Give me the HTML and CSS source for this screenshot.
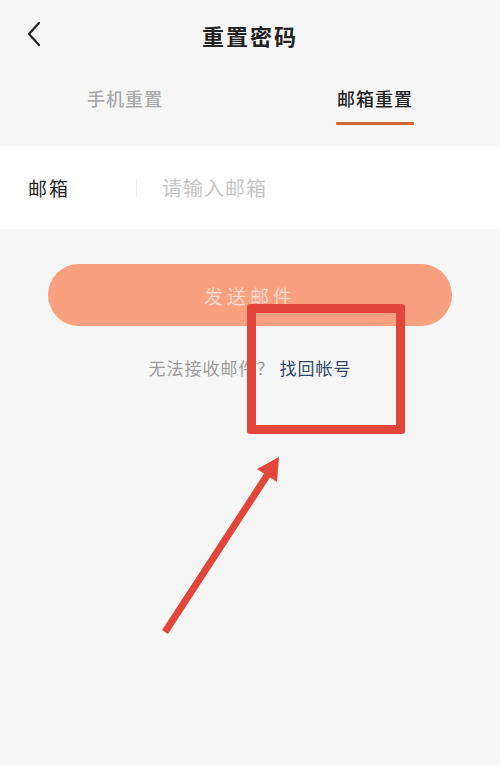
FILE: index.html
```html
<!DOCTYPE html>
<html lang="zh-CN">
<head>
<meta charset="utf-8">
<title>重置密码</title>
<link rel="stylesheet" href="styles.css">
</head>
<body>
<div class="page">
  <header class="topbar">
    <svg class="back" width="16" height="26" viewBox="0 0 16 26"><path d="M13 2 L3 13 L13 24" fill="none" stroke="#222" stroke-width="2.2" stroke-linecap="round" stroke-linejoin="round"/></svg>
    <h1 class="title">重置密码</h1>
  </header>
  <nav class="tabs">
    <div class="tab">手机重置</div>
    <div class="tab active">邮箱重置</div>
  </nav>
  <div class="field">
    <span class="label">邮箱</span>
    <span class="divider"></span>
    <span class="placeholder">请输入邮箱</span>
  </div>
  <div class="btn-wrap">
    <div class="btn">发送邮件</div>
  </div>
  <p class="hint">无法接收邮件？ <span class="link">找回帐号</span></p>

  <div class="mark-box"></div>
  <svg class="mark-arrow" width="500" height="766" viewBox="0 0 500 766">
    <line x1="165" y1="632" x2="268" y2="474" stroke="#e2463a" stroke-width="7" stroke-linecap="butt"/>
    <polygon points="279,457 277,482 257,469" fill="#e2463a"/>
  </svg>
</div>
</body>
</html>
```
FILE: styles.css
```css
* { box-sizing: border-box; }
html, body { margin: 0; padding: 0; }
body {
  background: #f6f6f6;
  font-family: "Noto Sans CJK SC", "Noto Sans", sans-serif;
  color: #222;
}
.page {
  position: relative;
  width: 500px;
  height: 766px;
  overflow: hidden;
}
.topbar {
  position: relative;
  height: 70px;
  display: flex;
  align-items: center;
  justify-content: center;
}
.back {
  position: absolute;
  left: 26px;
  top: 21px;
}
.title {
  margin: 0;
  font-size: 22px;
  font-weight: 700;
  letter-spacing: 2px;
  color: #222;
}
.tabs {
  display: flex;
  height: 76px;
}
.tab {
  flex: 1;
  display: flex;
  flex-direction: column;
  align-items: center;
  padding-top: 16px;
  font-size: 18px;
  line-height: 24px;
  letter-spacing: 1px;
  color: #aaa;
  font-weight: 500;
}
.tab.active {
  color: #222;
}
.tab.active::after {
  content: "";
  display: block;
  width: 78px;
  height: 3px;
  margin-top: 12px;
  background: #d4683a;
  border-radius: 1px;
}
.field {
  height: 83px;
  background: #fff;
  display: flex;
  align-items: center;
  padding-left: 28px;
}
.label {
  font-size: 19px;
  width: 108px;
  letter-spacing: 2px;
  color: #222;
}
.divider {
  width: 1px;
  height: 18px;
  background: #ececec;
  margin-right: 25px;
}
.placeholder {
  font-size: 20px;
  color: #c6c6c6;
  letter-spacing: 1px;
}
.btn-wrap {
  padding: 35px 48px 0;
}
.btn {
  height: 62px;
  border-radius: 31px;
  background: #f9a07f;
  color: rgba(255, 255, 255, 0.6);
  font-size: 19px;
  letter-spacing: 4px;
  display: flex;
  align-items: center;
  justify-content: center;
}
.hint {
  margin: 30px 0 0;
  text-align: center;
  font-size: 17px;
  line-height: 24px;
  color: #9c9c9c;
  letter-spacing: 1px;
}
.link {
  color: #2d4a6a;
}
.mark-box {
  position: absolute;
  left: 247px;
  top: 304px;
  width: 158px;
  height: 130px;
  border: 9px solid #e2463a;
  border-radius: 3px;
}
.mark-arrow {
  position: absolute;
  left: 0;
  top: 0;
  pointer-events: none;
}
```
